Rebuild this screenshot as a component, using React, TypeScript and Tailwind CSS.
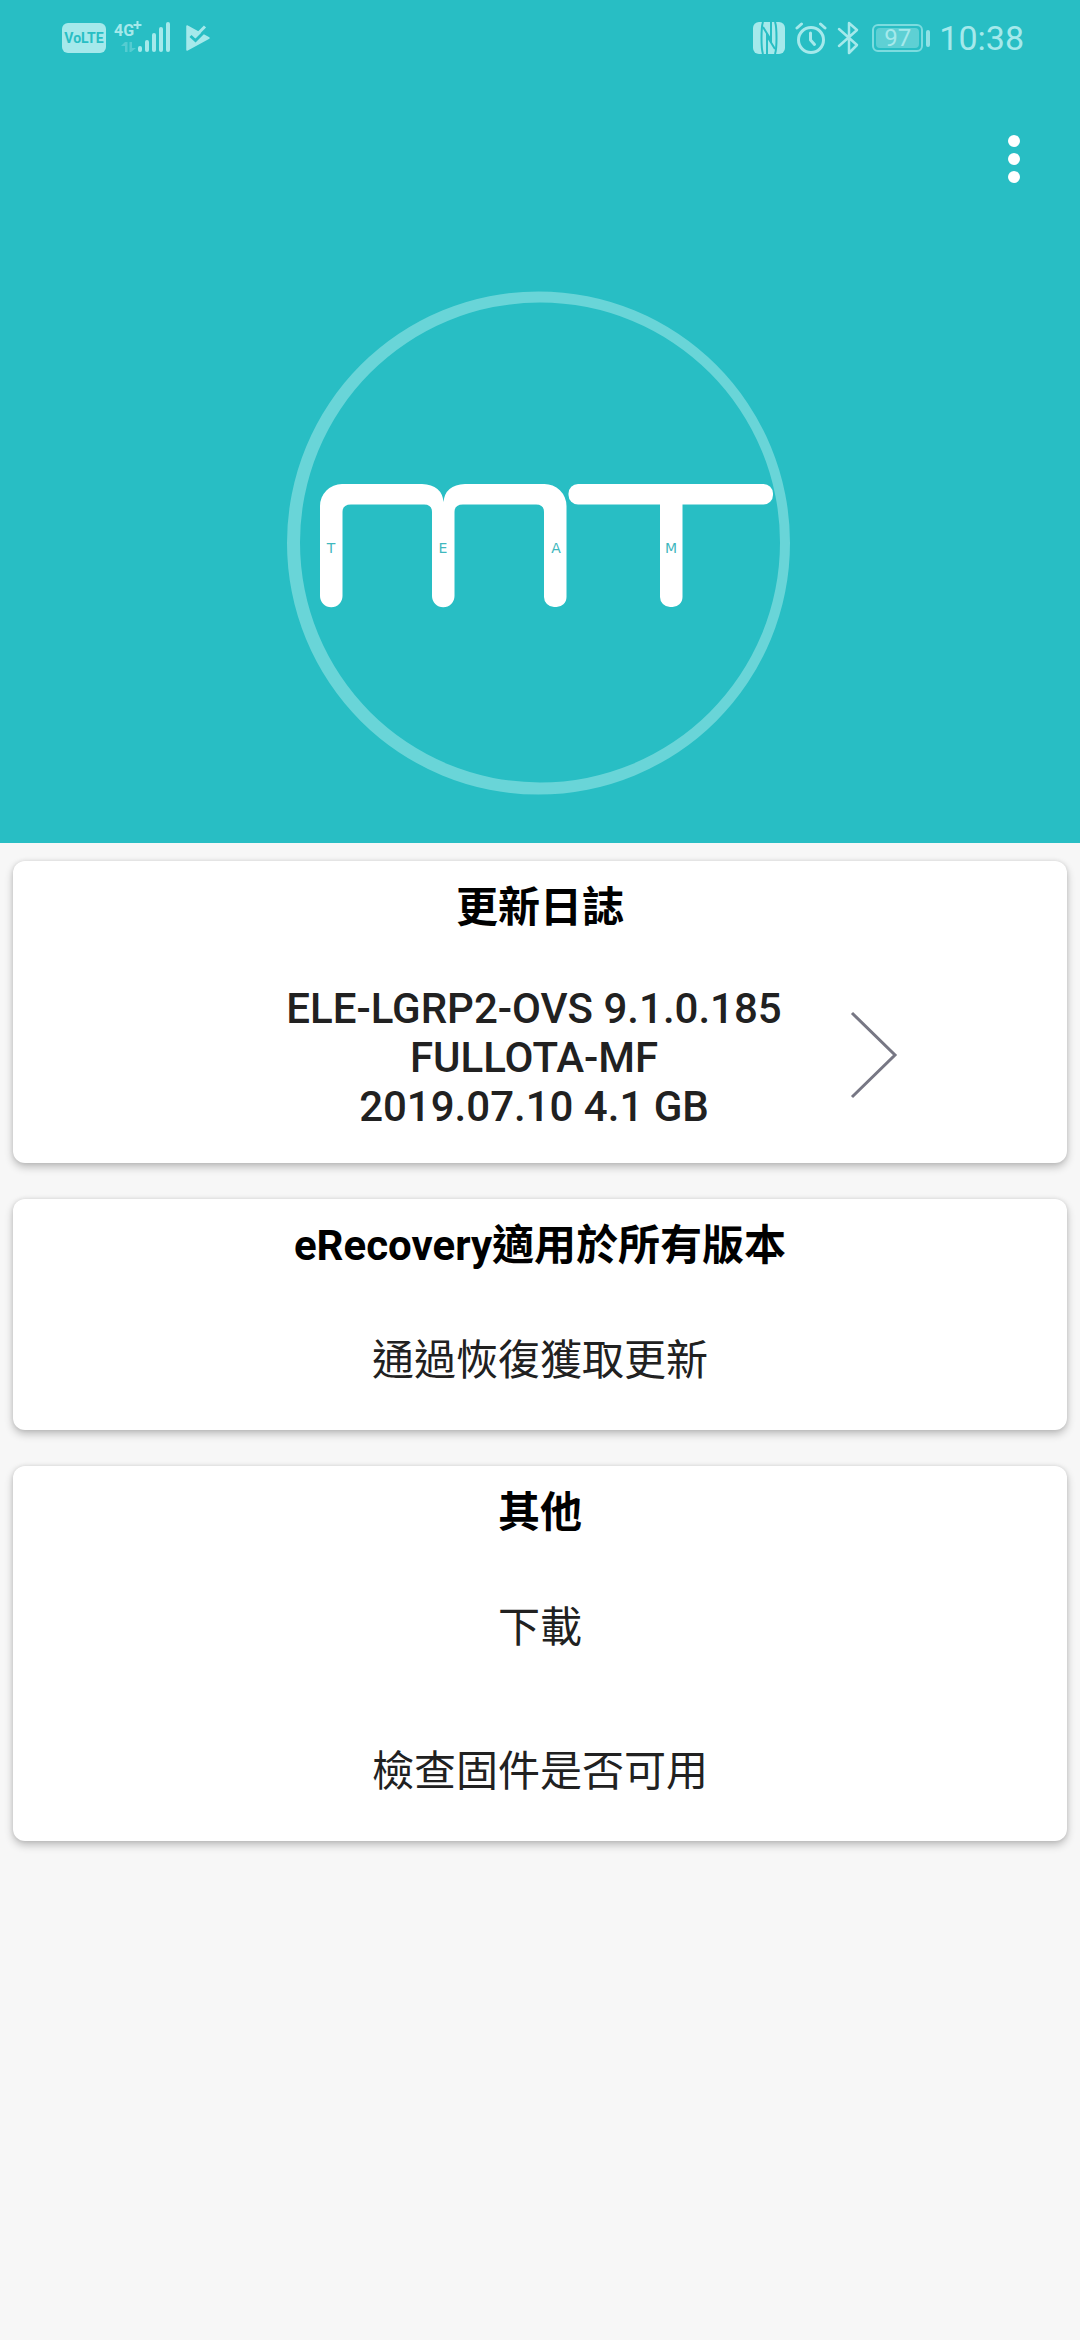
import type { ReactNode } from "react";

const fontStack = "font-[Roboto,'Noto_Sans_CJK_TC',sans-serif]";

function Signal() {
  return (
    <svg viewBox="113 20 60 36" className="h-9 w-[60px]" fill="currentColor" role="img" aria-label="4G+">
      <text x="114" y="36" fontSize="16" fontWeight="700" fontFamily="Roboto, sans-serif">
        4G
      </text>
      <path d="M136.500 21h2v3h3v2h-3v3h-2v-3h-3v-2h3z" />
      <path d="M125 42h2.500v10h-2.500v-6h-4zM129.500 42h2.500v6h4l-5 4h-1.500z" opacity=".35" />
      <rect x="138" y="46" width="4" height="6" rx="2" />
      <rect x="145" y="40" width="4" height="12" rx="2" />
      <rect x="152" y="33" width="4" height="19" rx="2" />
      <rect x="159" y="27" width="4" height="25" rx="2" />
      <rect x="166" y="22" width="4" height="30" rx="2" />
    </svg>
  );
}

function PlayCheck() {
  return (
    <svg viewBox="185 23 26 30" className="h-[30px] w-[26px]" aria-hidden="true">
      <path d="M187 26v24l22-12z" fill="currentColor" stroke="currentColor" strokeWidth="1.500" strokeLinejoin="round" />
      <path d="M190.500 36l5 4.500L208 28" fill="none" stroke="#28bec4" strokeWidth="3" />
      <path d="M193 33l2.500 3L205 26.500" fill="none" stroke="currentColor" strokeWidth="3" />
    </svg>
  );
}

function Nfc() {
  return (
    <svg viewBox="752 21 32 32" className="size-8" role="img" aria-label="NFC">
      <rect x="752" y="21" width="32" height="32" rx="6" fill="currentColor" />
      <path d="M762 53q-1.500-4-1.500-16t1.500-16M774 21q1.500 4 1.500 16t-1.500 16" fill="none" stroke="#28bec4" strokeWidth="2" />
      <path d="M766 53V35l8 13M770 21v18l-8-13" fill="none" stroke="#28bec4" strokeWidth="2" />
    </svg>
  );
}

function Alarm() {
  return (
    <svg viewBox="794 21 32 32" className="size-8" fill="none" stroke="currentColor" strokeLinecap="round" role="img" aria-label="Alarm">
      <circle cx="810" cy="39" r="12.500" strokeWidth="3" />
      <path d="M809.500 32v7l4 4.500" strokeWidth="3" strokeLinejoin="round" />
      <path d="M796 27l4.500-4M824 27l-4.500-4" strokeWidth="3" />
    </svg>
  );
}

function Bluetooth() {
  return (
    <svg viewBox="835 20 24 34" className="h-[34px] w-6" fill="none" stroke="currentColor" strokeWidth="2.500" strokeLinejoin="round" strokeLinecap="round" role="img" aria-label="Bluetooth">
      <path d="M838 28l18 16-8 8V22l8 7-18 16" />
    </svg>
  );
}

function StatusBar() {
  return (
    <div className="flex h-[76px] items-start justify-between pt-5 pr-14 pl-[62px] text-[#a5e9eb]">
      <div className="flex h-9 items-center">
        <span className="mr-[7px] flex h-[30px] w-11 items-center justify-center rounded-md bg-[#a5e9eb] text-sm leading-none font-bold text-[#28bec4]">
          VoLTE
        </span>
        <Signal />
        <span className="ml-3">
          <PlayCheck />
        </span>
      </div>
      <div className="flex h-9 items-center">
        <Nfc />
        <span className="ml-[10px]">
          <Alarm />
        </span>
        <span className="ml-[9px]">
          <Bluetooth />
        </span>
        <span className="ml-3 flex items-center gap-[3px]">
          <span className="flex h-7 w-[51px] rounded-md border-2 border-[#7cdcdf] p-[2px]">
            <span className="flex flex-1 items-center justify-center rounded-sm bg-[#5ed0d4] text-2xl leading-none">97</span>
          </span>
          <span className="h-[17px] w-1 rounded-sm bg-[#8fe2e5]" />
        </span>
        <time className="ml-[9px] text-[34px] leading-9">10:38</time>
      </div>
    </div>
  );
}

function Logo() {
  return (
    <svg viewBox="280 284 520 520" className="size-[520px]" role="img" aria-label="MT Team">
      <path
        fillRule="evenodd"
        fill="#69d5d8"
        d="M287 543a251.500 251.500 0 1 0 503 0a251.500 251.500 0 1 0-503 0zM300 542.500a240 240 0 1 0 480 0a240 240 0 1 0-480 0z"
      />
      <g fill="#fff">
        <path d="M320 506A22 22 0 0 1 342 484H422Q442 485 443.500 502Q445 485 465 484H544A22 22 0 0 1 566.500 506V597A10 10 0 0 1 556 607H554A10 10 0 0 1 544 597V512Q544 504.500 536 504.500H463Q454.500 504.500 454.500 512V596A11 11 0 0 1 432 596V512Q432 504.500 424 504.500H351Q342.500 504.500 342.500 512V596A11 11 0 0 1 320 596Z" />
        <rect x="568.500" y="484" width="204.500" height="20.500" rx="9.500" />
        <path d="M660 500H682.500V597A10 10 0 0 1 672 607H670A10 10 0 0 1 660 597Z" />
      </g>
      <g fill="#3fb8be" fontFamily="'DejaVu Sans', sans-serif" fontSize="14" textAnchor="middle">
        <text x="331" y="553">T</text>
        <text x="443" y="553">E</text>
        <text x="556" y="553">A</text>
        <text x="671" y="553">M</text>
      </g>
    </svg>
  );
}

function Card({ title, children }: { title: string; children: ReactNode }) {
  return (
    <section className="flex flex-col rounded-xl bg-white shadow-[0_4px_8px_rgba(0,0,0,0.24),0_0_4px_rgba(0,0,0,0.1)]">
      <h2 className="flex h-[87px] items-center justify-center pt-[6px] text-[42px] leading-[49px] font-bold text-black">{title}</h2>
      {children}
    </section>
  );
}

function Action({ label }: { label: string }) {
  return (
    <button type="button" className="flex h-36 w-full items-center justify-center pt-1 text-[42px] leading-[49px] text-[#212121]">
      {label}
    </button>
  );
}

export default function App() {
  return (
    <div className={`min-h-screen bg-[#f7f7f7] ${fontStack}`}>
      <header className="bg-[#28bec4] pb-[39px]">
        <StatusBar />
        <div className="flex h-[166px] items-center justify-end pr-9">
          <button type="button" aria-label="More options" className="flex h-24 w-[60px] flex-col items-center justify-center gap-[6px]">
            <span className="size-3 rounded-full bg-white" />
            <span className="size-3 rounded-full bg-white" />
            <span className="size-3 rounded-full bg-white" />
          </button>
        </div>
        <div className="flex justify-center pt-[42px]">
          <Logo />
        </div>
      </header>
      <main className="flex flex-col gap-9 px-[13px] pt-[18px] pb-9">
        <Card title="更新日誌">
          <button type="button" className="grid w-full grid-cols-[1fr_auto_1fr] items-center pt-9 pb-8 text-[#212121]">
            <span />
            <span className="pr-3 text-center text-[42px] leading-[49px] font-medium">
              ELE-LGRP2-OVS 9.1.0.185
              <br />
              FULLOTA-MF
              <br />
              2019.07.10 4.1 GB
            </span>
            <svg viewBox="0 0 48 88" className="mb-[6px] ml-14 h-[88px] w-12" fill="none" stroke="#777784" strokeWidth="3" aria-hidden="true">
              <path d="M2 2l43 42L2 86" />
            </svg>
          </button>
        </Card>
        <Card title="eRecovery適用於所有版本">
          <Action label="通過恢復獲取更新" />
        </Card>
        <Card title="其他">
          <Action label="下載" />
          <Action label="檢查固件是否可用" />
        </Card>
      </main>
    </div>
  );
}
